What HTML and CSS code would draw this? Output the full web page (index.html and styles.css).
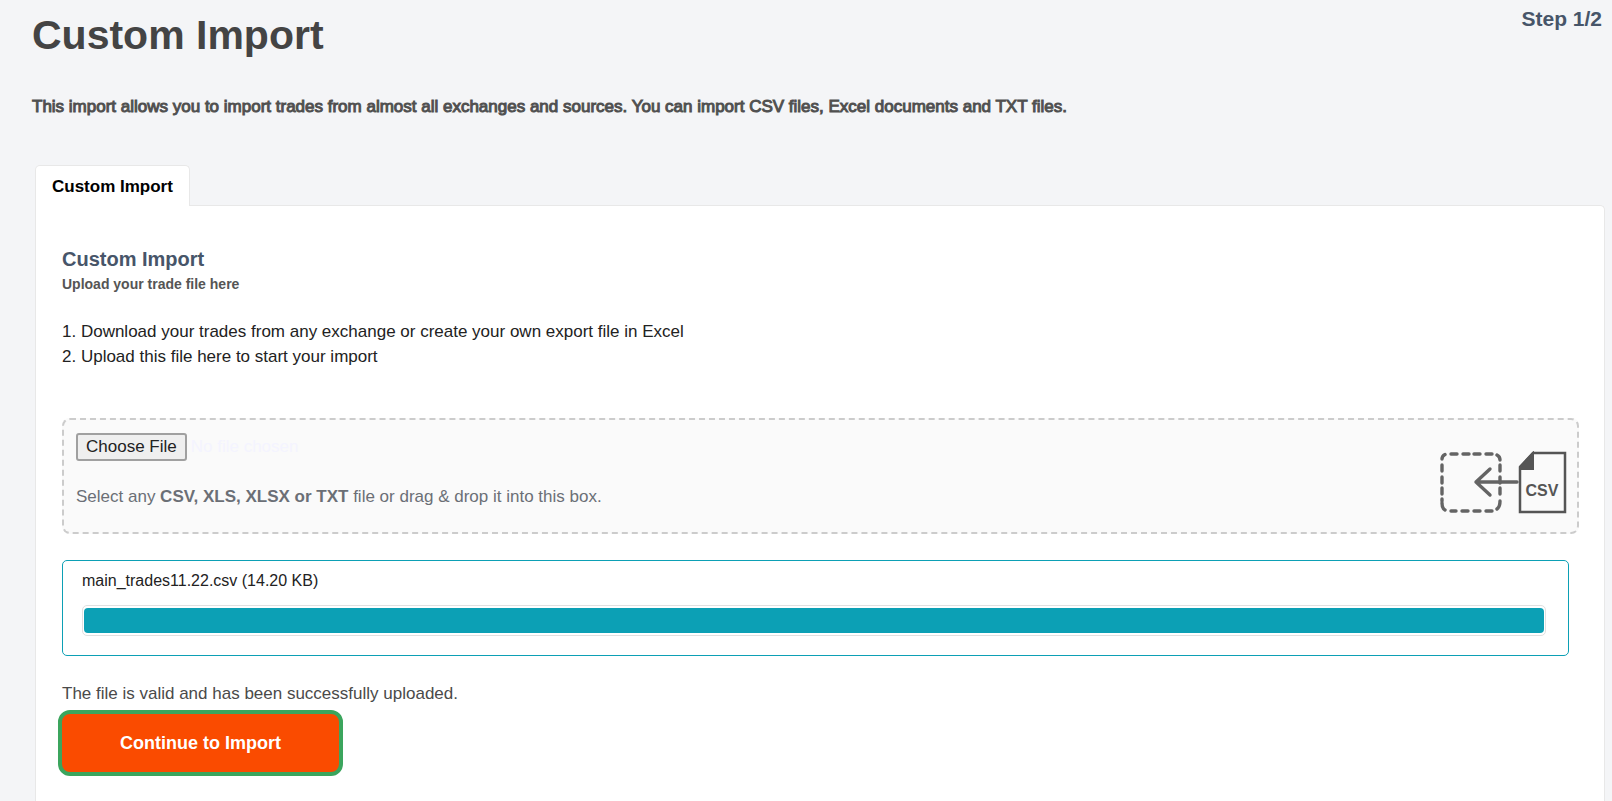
FILE: index.html
```html
<!DOCTYPE html>
<html lang="en">
<head>
<meta charset="utf-8">
<title>Custom Import</title>
<link rel="stylesheet" href="styles.css">
</head>
<body>
<main class="page">
  <header class="page-header">
    <h1 class="page-title">Custom Import</h1>
    <p class="step">Step 1/2</p>
  </header>
  <p class="intro">This import allows you to import trades from almost all exchanges and sources. You can import CSV files, Excel documents and TXT files.</p>

  <div class="tabs" role="tablist">
    <button class="tab" type="button" role="tab" id="tab-custom" aria-selected="true" aria-controls="panel-custom">Custom Import</button>
  </div>
  <section class="panel" role="tabpanel" id="panel-custom" aria-labelledby="tab-custom">
    <h2 class="panel-title">Custom Import</h2>
    <p class="panel-subtitle">Upload your trade file here</p>
    <ol class="instructions">
      <li>Download your trades from any exchange or create your own export file in Excel</li>
      <li>Upload this file here to start your import</li>
    </ol>

    <div class="dropzone">
      <div class="dropzone-body">
        <input class="file-input" type="file" id="trade-file" accept=".csv,.xls,.xlsx,.txt">
        <label class="file-hint" for="trade-file">Select any <strong>CSV, XLS, XLSX or TXT</strong> file or drag &amp; drop it into this box.</label>
      </div>
      <svg class="dropzone-icon" width="128" height="64" viewBox="0 0 128 64" fill="none" aria-hidden="true">
        <g stroke="#646464" stroke-width="3.4" stroke-linecap="round">
          <path d="M11 3h6M23 3h6M34 3h6M46 3h6M11 60h5M22 60h6M34 60h6M46 60h6M2 14v6M2 26v6M2 37v6M2 48v2M60 14v6M60 26v6M60 37v6"/>
          <path d="M2 8q0-3 3-4.500M57 4q3 1.500 3 5M60 50q0 6-3 8M5 59q-3-1.500-3-7"/>
          <path d="M77 31H36M50 18L36 31l14 13" stroke-linejoin="round"/>
        </g>
        <path d="M93 2h32v59H80V16z" stroke="#555" stroke-width="2.500"/>
        <path d="M93 2v16H80v-2z" fill="#555" stroke="#555" stroke-width="2"/>
        <text class="icon-label" x="102" y="45" text-anchor="middle">CSV</text>
      </svg>
    </div>

    <div class="upload">
      <label class="upload-name" for="upload-progress">main_trades11.22.csv (14.20 KB)</label>
      <progress class="upload-progress" id="upload-progress" value="100" max="100"></progress>
    </div>

    <p class="status">The file is valid and has been successfully uploaded.</p>
    <button class="continue" type="button">Continue to Import</button>
  </section>
</main>
</body>
</html>
```
FILE: styles.css
```css
* {
  box-sizing: border-box;
}

body {
  margin: 0;
  background: #f4f5f7;
  color: #222;
  font: 17px/25px "Liberation Sans", Arial, sans-serif;
}

h1, h2, p, ol {
  margin: 0;
}

.page {
  display: flex;
  flex-direction: column;
  min-height: 100vh;
  padding: 0 7px 0 35px;
}

.page-header {
  display: flex;
  justify-content: space-between;
  align-items: flex-start;
  margin-left: -3px;
  padding: 6px 3px 0 0;
}

.page-title {
  color: #444;
  font-size: 41px;
  line-height: 58px;
}

.step {
  color: #475569;
  font-size: 21px;
  font-weight: bold;
}

.intro {
  margin: 30px 0 46px -3px;
  color: #505050;
  -webkit-text-stroke: 1px #505050;
}

.tabs {
  display: flex;
}

.tab {
  margin-bottom: -1px;
  padding: 8px 16px 7px;
  border: 1px solid #e8e8e8;
  border-bottom: 0;
  border-radius: 5px 5px 0 0;
  background: #fff;
  color: #000;
  font: bold 17px/25px "Liberation Sans", Arial, sans-serif;
  z-index: 1;
}

.panel {
  flex: 1;
  padding: 41px 25px 25px 26px;
  border: 1px solid #e8e8e8;
  border-bottom: 0;
  border-radius: 0 5px 0 0;
  background: #fff;
}

.panel-title {
  color: #475569;
  font-size: 20px;
  line-height: 25px;
}

.panel-subtitle {
  color: #555;
  font-size: 14px;
  font-weight: bold;
}

.instructions {
  margin: 22px 0 49px;
  padding: 0;
  list-style-position: inside;
}

.dropzone {
  display: flex;
  justify-content: space-between;
  align-items: flex-end;
  padding: 13px 9px 17px 12px;
  border: 2px dashed #ccc;
  border-radius: 8px;
  background: #fafafa;
}

.dropzone-body {
  display: flex;
  flex-direction: column;
  gap: 23px;
  padding-bottom: 6px;
}

.file-input {
  color: #f4f4ff;
  font: 17px/22px "Liberation Sans", Arial, sans-serif;
}

.file-input::file-selector-button {
  padding: 1px 8px;
  border: 2px solid #a0a0a0;
  border-radius: 3px;
  background: #efefef;
  color: #222;
  font: inherit;
}

.file-hint {
  color: #6b6f76;
}

.icon-label {
  fill: #555;
  font-size: 16px;
  font-weight: bold;
}

.upload {
  display: flex;
  flex-direction: column;
  gap: 12px;
  margin: 26px 10px 25px 0;
  padding: 7px 22px 19px 19px;
  border: 1px solid #0ca0b5;
  border-radius: 5px;
}

.upload-name {
  font-size: 16px;
}

.upload-progress {
  width: 100%;
  height: 31px;
  padding: 2px 1px;
  border: 1px solid #e0e0e0;
  border-radius: 5px;
  background: #fff;
  appearance: none;
}

.upload-progress::-webkit-progress-bar {
  background: #fff;
}

.upload-progress::-webkit-progress-value {
  border-radius: 4px;
  background: #0ca0b5;
}

.status {
  color: #4a4a4a;
}

.continue {
  margin: 4px 0 0 -4px;
  padding: 17px 58px 16px;
  border: 4px solid #3ba55d;
  border-radius: 12px;
  background: #fa4b00;
  color: #fff;
  font: bold 18px/25px "Liberation Sans", Arial, sans-serif;
}
```
